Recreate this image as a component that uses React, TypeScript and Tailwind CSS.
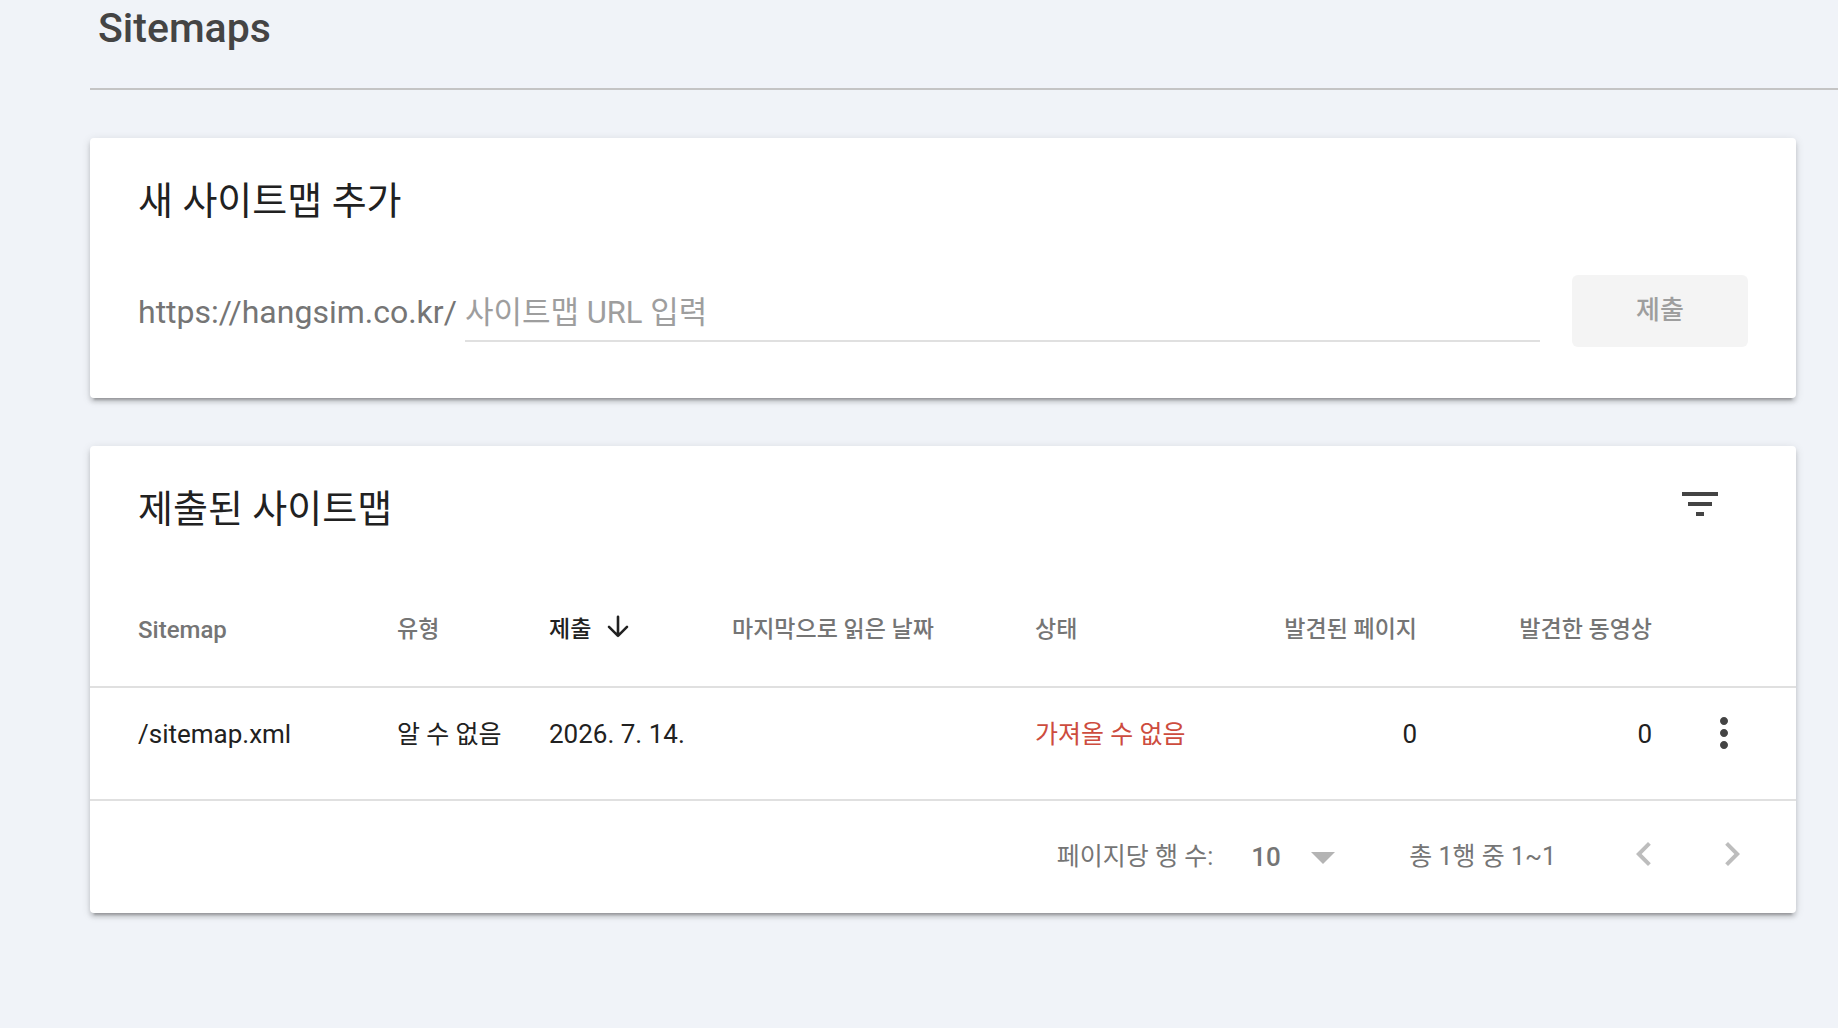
import { useState } from "react";

interface SitemapRow {
  path: string;
  type: string;
  submitted: string;
  lastRead: string;
  status: string;
  pages: number;
  videos: number;
}

const ROWS: SitemapRow[] = [
  {
    path: "/sitemap.xml",
    type: "알 수 없음",
    submitted: "2026. 7. 14.",
    lastRead: "",
    status: "가져올 수 없음",
    pages: 0,
    videos: 0,
  },
];

interface IconProps {
  d: string;
}

// 24-unit grid drawn at 48px
const Icon: React.FC<IconProps> = ({ d }) => (
  <svg viewBox="0 0 24 24" className="w-12 h-12" fill="currentColor" aria-hidden="true">
    <path d={d} />
  </svg>
);

const CARD =
  "bg-white rounded-sm shadow-[0_4px_4px_0_rgba(0,0,0,0.14),0_6px_2px_-4px_rgba(0,0,0,0.2),0_2px_10px_0_rgba(0,0,0,0.12)]";

const AddSitemapCard: React.FC = () => {
  const [url, setUrl] = useState("");

  return (
    <section className={CARD}>
      <h2 className="px-12 pt-[37px] text-[38px] leading-[52px] text-[#212121]">
        새 사이트맵 추가
      </h2>

      <form
        className="flex items-center px-12 pt-12 pb-[51px]"
        onSubmit={(e) => e.preventDefault()}
      >
        <label
          htmlFor="sitemap-url"
          className="pt-0.5 text-[32px] leading-10 text-[#757575] whitespace-nowrap"
        >
          https://hangsim.co.kr/
        </label>
        <input
          id="sitemap-url"
          type="text"
          value={url}
          onChange={(e) => setUrl(e.target.value)}
          placeholder="사이트맵 URL 입력"
          className="flex-1 min-w-0 h-[62px] ml-2 pt-1 text-[31px] text-[#212121] placeholder:text-[#9e9e9e]
                     border-b-2 border-[#e0e0e0] outline-none"
        />
        <button
          type="submit"
          disabled={!url}
          className="w-44 h-[72px] ml-8 pb-0.5 rounded-md bg-[#f4f4f4] text-[26px] font-medium text-[#9e9e9e]"
        >
          제출
        </button>
      </form>
    </section>
  );
};

const SubmittedCard: React.FC = () => {
  const [perPage, setPerPage] = useState("10");

  return (
    <section className={CARD}>
      {/* Title */}
      <div className="flex items-start justify-between pl-12 pr-[72px] pt-[34px]">
        <h2 className="pt-[3px] text-[38px] leading-[52px] text-[#212121]">
          제출된 사이트맵
        </h2>
        <button type="button" aria-label="필터" className="text-[#444444]">
          <Icon d="M10 18h4v-2h-4v2zM3 6v2h18V6H3zm3 7h12v-2H6v2z" />
        </button>
      </div>

      {/* Table */}
      <table className="w-full mt-[38px] table-fixed border-collapse text-left whitespace-nowrap">
        <colgroup>
          <col />
          <col className="w-[152px]" />
          <col className="w-[183px]" />
          <col className="w-[303px]" />
          <col className="w-[215px]" />
          <col className="w-[167px]" />
          <col className="w-[235px]" />
          <col className="w-36" />
        </colgroup>
        <thead>
          <tr className="h-[114px] border-b-2 border-[#e0e0e0] text-[23px] text-[#757575]">
            <th className="pl-12 text-2xl font-medium">Sitemap</th>
            <th className="pt-0.5 font-medium">유형</th>
            <th className="pt-0.5 font-medium text-[#212121]" aria-sort="descending">
              <button type="button" className="flex items-center gap-[11px]">
                제출
                <svg
                  viewBox="0 0 32 32"
                  className="w-8 h-8"
                  fill="none"
                  stroke="currentColor"
                  strokeWidth="2.6"
                  strokeLinecap="round"
                  strokeLinejoin="round"
                  aria-hidden="true"
                >
                  <path d="M16 1.8v19M7 11.8l9 9 9-9" />
                </svg>
              </button>
            </th>
            <th className="pt-0.5 font-medium">마지막으로 읽은 날짜</th>
            <th className="pt-0.5 font-medium">상태</th>
            <th className="pt-0.5 font-medium text-right">발견된 페이지</th>
            <th className="pt-0.5 font-medium text-right">발견한 동영상</th>
            <th />
          </tr>
        </thead>
        <tbody>
          {ROWS.map((row) => (
            <tr
              key={row.path}
              className="h-[113px] border-b-2 border-[#e0e0e0] text-[26px] text-[#212121]"
            >
              <td className="pl-12 pb-[18px]">{row.path}</td>
              <td className="pb-[18px] text-[25px]">{row.type}</td>
              <td className="pb-[18px]">{row.submitted}</td>
              <td className="pb-[18px]">{row.lastRead}</td>
              <td className="pb-[18px] text-[25px] text-[#cd4c3e]">{row.status}</td>
              <td className="pb-[18px] text-right">{row.pages}</td>
              <td className="pb-[18px] text-right">{row.videos}</td>
              <td className="pb-[22px]">
                <button
                  type="button"
                  aria-label="옵션 더보기"
                  className="block mx-auto text-[#444444]"
                >
                  <Icon d="M12 8c1.1 0 2-.9 2-2s-.9-2-2-2-2 .9-2 2 .9 2 2 2zm0 2c-1.1 0-2 .9-2 2s.9 2 2 2 2-.9 2-2-.9-2-2-2zm0 6c-1.1 0-2 .9-2 2s.9 2 2 2 2-.9 2-2-.9-2-2-2z" />
                </button>
              </td>
            </tr>
          ))}
        </tbody>
      </table>

      {/* Pagination */}
      <div className="flex items-center justify-end h-28 pr-10 text-[25px] text-[#757575]">
        <label htmlFor="rows-per-page">페이지당 행 수:</label>
        <div className="relative ml-[38px]">
          <select
            id="rows-per-page"
            value={perPage}
            onChange={(e) => setPerPage(e.target.value)}
            className="w-[84px] appearance-none bg-transparent text-[26px] font-medium outline-none"
          >
            <option>10</option>
            <option>25</option>
            <option>50</option>
          </select>
          <svg
            viewBox="0 0 24 12"
            className="absolute right-0 top-1/2 -mt-[5px] w-6 h-3 pointer-events-none"
            fill="#b4b4b4"
            aria-hidden="true"
          >
            <path d="M0 0h24L12 12z" />
          </svg>
        </div>
        <span className="ml-[74px]">총 1행 중 1~1</span>
        <button
          type="button"
          aria-label="이전 페이지"
          disabled
          className="ml-16 pb-1.5 text-[#bdbdbd]"
        >
          <Icon d="M15.41 7.41 14 6l-6 6 6 6 1.41-1.41L10.83 12z" />
        </button>
        <button
          type="button"
          aria-label="다음 페이지"
          disabled
          className="ml-10 pb-1.5 text-[#bdbdbd]"
        >
          <Icon d="M10 6 8.59 7.41 13.17 12l-4.58 4.59L10 18l6-6z" />
        </button>
      </div>
    </section>
  );
};

export default function App() {
  return (
    <main
      lang="ko"
      className="min-h-screen pl-[90px] bg-[#f0f3f8] font-[Roboto,'Noto_Sans_CJK_KR',sans-serif]"
    >
      <header className="h-[90px] border-b-2 border-[#c4c4c4] pl-2">
        <h1 className="pt-1 text-[41px] leading-[48px] font-medium text-[#444444]">
          Sitemaps
        </h1>
      </header>

      <div className="flex flex-col gap-12 pt-12 pr-[42px] pb-12">
        <AddSitemapCard />
        <SubmittedCard />
      </div>
    </main>
  );
}
